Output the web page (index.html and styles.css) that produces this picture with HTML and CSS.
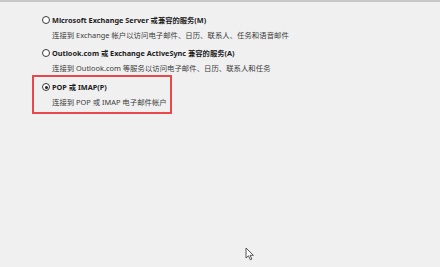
FILE: index.html
```html
<!DOCTYPE html>
<html lang="zh-CN">
<head>
  <meta charset="UTF-8">
  <title>添加帐户</title>
  <link rel="stylesheet" href="styles.css">
</head>
<body>
  <div class="options">
    <div class="option">
      <span class="radio"></span>
      <div class="title">Microsoft Exchange Server 或兼容的服务(M)</div>
      <div class="desc">连接到 Exchange 帐户以访问电子邮件、日历、联系人、任务和语音邮件</div>
    </div>
    <div class="option">
      <span class="radio"></span>
      <div class="title">Outlook.com 或 Exchange ActiveSync 兼容的服务(A)</div>
      <div class="desc">连接到 Outlook.com 等服务以访问电子邮件、日历、联系人和任务</div>
    </div>
    <div class="option selected">
      <span class="radio checked"></span>
      <div class="title">POP 或 IMAP(P)</div>
      <div class="desc">连接到 POP 或 IMAP 电子邮件帐户</div>
    </div>
  </div>

  <!-- mouse pointer -->
  <svg class="cursor" width="10" height="14" viewBox="0 0 10 14">
    <path d="M1 1 L1 11 L3.5 8.8 L5.3 12.8 L6.8 12.1 L5.1 8.3 L8.4 8.3 Z" fill="#fff" stroke="#444" stroke-width="0.9" stroke-linejoin="round"/>
  </svg>
</body>
</html>
```

FILE: styles.css
```css
body {
  margin: 0;
  height: 267px;
  background: #f0f0f0;
  border-top: 2px solid #c8c8c8;
  box-sizing: border-box;
  font-family: "Noto Sans", "Noto Sans CJK SC", sans-serif;
  position: relative;
  overflow: hidden;
}
.options {
  padding: 11px 0 0 32px;
}
.option {
  display: grid;
  grid-template-columns: 12px auto;
  align-items: center;
  padding-left: 8px;
  margin-bottom: 4px;
  line-height: 14px;
}
.option.selected {
  width: 140px;
  box-sizing: border-box;
  margin-top: -4px;
  border: 2px solid #e8484b;
  padding: 3px 6px 3px;
}
.radio {
  width: 8px;
  height: 8px;
  margin-left: 2px;
  border: 1px solid #3a3a3a;
  border-radius: 50%;
  box-sizing: border-box;
  background: #fff;
  position: relative;
}
.radio.checked::after {
  content: "";
  position: absolute;
  left: 1.5px;
  top: 1.5px;
  width: 3px;
  height: 3px;
  border-radius: 50%;
  background: #222;
}
.title {
  font-size: 7.3px;
  font-weight: bold;
  color: #1c1c1c;
  white-space: nowrap;
}
.desc {
  grid-column: 2;
  padding-top: 1px;
  font-size: 7.4px;
  color: #3c3c3c;
  white-space: nowrap;
}
.cursor {
  position: absolute;
  left: 245px;
  top: 245px;
}
```
